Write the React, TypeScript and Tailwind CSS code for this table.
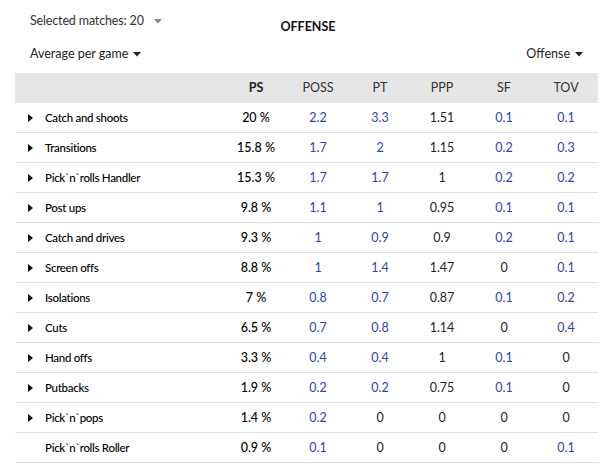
import React from "react";

type Row = { name: string; arrow: boolean; ps: string; v: string[] };

const rows: Row[] = [
  { name: "Catch and shoots", arrow: true, ps: "20 %", v: ["2.2", "3.3", "1.51", "0.1", "0.1"] },
  { name: "Transitions", arrow: true, ps: "15.8 %", v: ["1.7", "2", "1.15", "0.2", "0.3"] },
  { name: "Pick`n`rolls Handler", arrow: true, ps: "15.3 %", v: ["1.7", "1.7", "1", "0.2", "0.2"] },
  { name: "Post ups", arrow: true, ps: "9.8 %", v: ["1.1", "1", "0.95", "0.1", "0.1"] },
  { name: "Catch and drives", arrow: true, ps: "9.3 %", v: ["1", "0.9", "0.9", "0.2", "0.1"] },
  { name: "Screen offs", arrow: true, ps: "8.8 %", v: ["1", "1.4", "1.47", "0", "0.1"] },
  { name: "Isolations", arrow: true, ps: "7 %", v: ["0.8", "0.7", "0.87", "0.1", "0.2"] },
  { name: "Cuts", arrow: true, ps: "6.5 %", v: ["0.7", "0.8", "1.14", "0", "0.4"] },
  { name: "Hand offs", arrow: true, ps: "3.3 %", v: ["0.4", "0.4", "1", "0.1", "0"] },
  { name: "Putbacks", arrow: true, ps: "1.9 %", v: ["0.2", "0.2", "0.75", "0.1", "0"] },
  { name: "Pick`n`pops", arrow: true, ps: "1.4 %", v: ["0.2", "0", "0", "0", "0"] },
  { name: "Pick`n`rolls Roller", arrow: false, ps: "0.9 %", v: ["0.1", "0", "0", "0", "0.1"] },
];

const heads = ["POSS", "PT", "PPP", "SF", "TOV"];

function Caret({ className }: { className: string }) {
  return (
    <svg width="8" height="5" viewBox="0 0 8 5" className={className}>
      <path d="M0 0 L8 0 L4 4.5 Z" fill="currentColor" />
    </svg>
  );
}

function RowArrow() {
  return (
    <svg width="5" height="8" viewBox="0 0 5 8" className="text-[#111]">
      <path d="M0 0 L5 4 L0 8 Z" fill="currentColor" />
    </svg>
  );
}

export default function App() {
  return (
    <div
      className="w-[604px] h-[470px] bg-white text-[12.5px] text-[#222] overflow-hidden"
      style={{ fontFamily: "'Lato', 'Liberation Sans', sans-serif" }}
    >
      <div className="relative h-[73px]">
        <div className="flex items-center gap-[10px] pl-[30px] pt-[13px] h-[29px] text-[#333] tracking-[-0.15px]">
          <span>Selected matches: 20</span>
          <Caret className="text-[#888]" />
        </div>
        <div className="absolute left-0 right-0 top-[18px] text-center font-bold text-[#111] pl-[12px]">
          OFFENSE
        </div>
        <div className="flex items-center justify-between pl-[30px] pr-[21px] mt-[17px] h-[16px] text-[#222]">
          <div className="flex items-center gap-[5px]">
            <span>Average per game</span>
            <Caret className="text-[#222]" />
          </div>
          <div className="flex items-center gap-[5px]">
            <span>Offense</span>
            <Caret className="text-[#222]" />
          </div>
        </div>
      </div>
      <div className="ml-[15px] w-[583px]">
        <div className="flex h-[30px] items-center bg-[#e6e6e6] text-[#333] pt-[1px]">
          <div className="w-[210px]" />
          <div className="w-[62px] text-center font-bold text-[#222]">PS</div>
          {heads.map((h) => (
            <div key={h} className="w-[62px] text-center">
              {h}
            </div>
          ))}
        </div>
        {rows.map((r) => (
          <div key={r.name} className="flex h-[30px] items-center border-b border-[#dfe3e6] pt-[2px]">
            <div className="w-[210px] flex items-center">
              <div className="w-[30px] flex justify-center pl-[1px] -mt-[1px]">{r.arrow ? <RowArrow /> : null}</div>
              <span className="font-medium text-[#000] text-[11.5px] tracking-[-0.3px] -mt-[1px]">{r.name}</span>
            </div>
            <div className="w-[62px] text-center font-medium text-[#000]">{r.ps}</div>
            {r.v.map((x, i) => {
              const blue = i !== 2 && x !== "0";
              return (
                <div key={i} className={"w-[62px] text-center " + (blue ? "text-[#2f43b0]" : "text-[#222]")}>
                  {x}
                </div>
              );
            })}
          </div>
        ))}
      </div>
    </div>
  );
}
